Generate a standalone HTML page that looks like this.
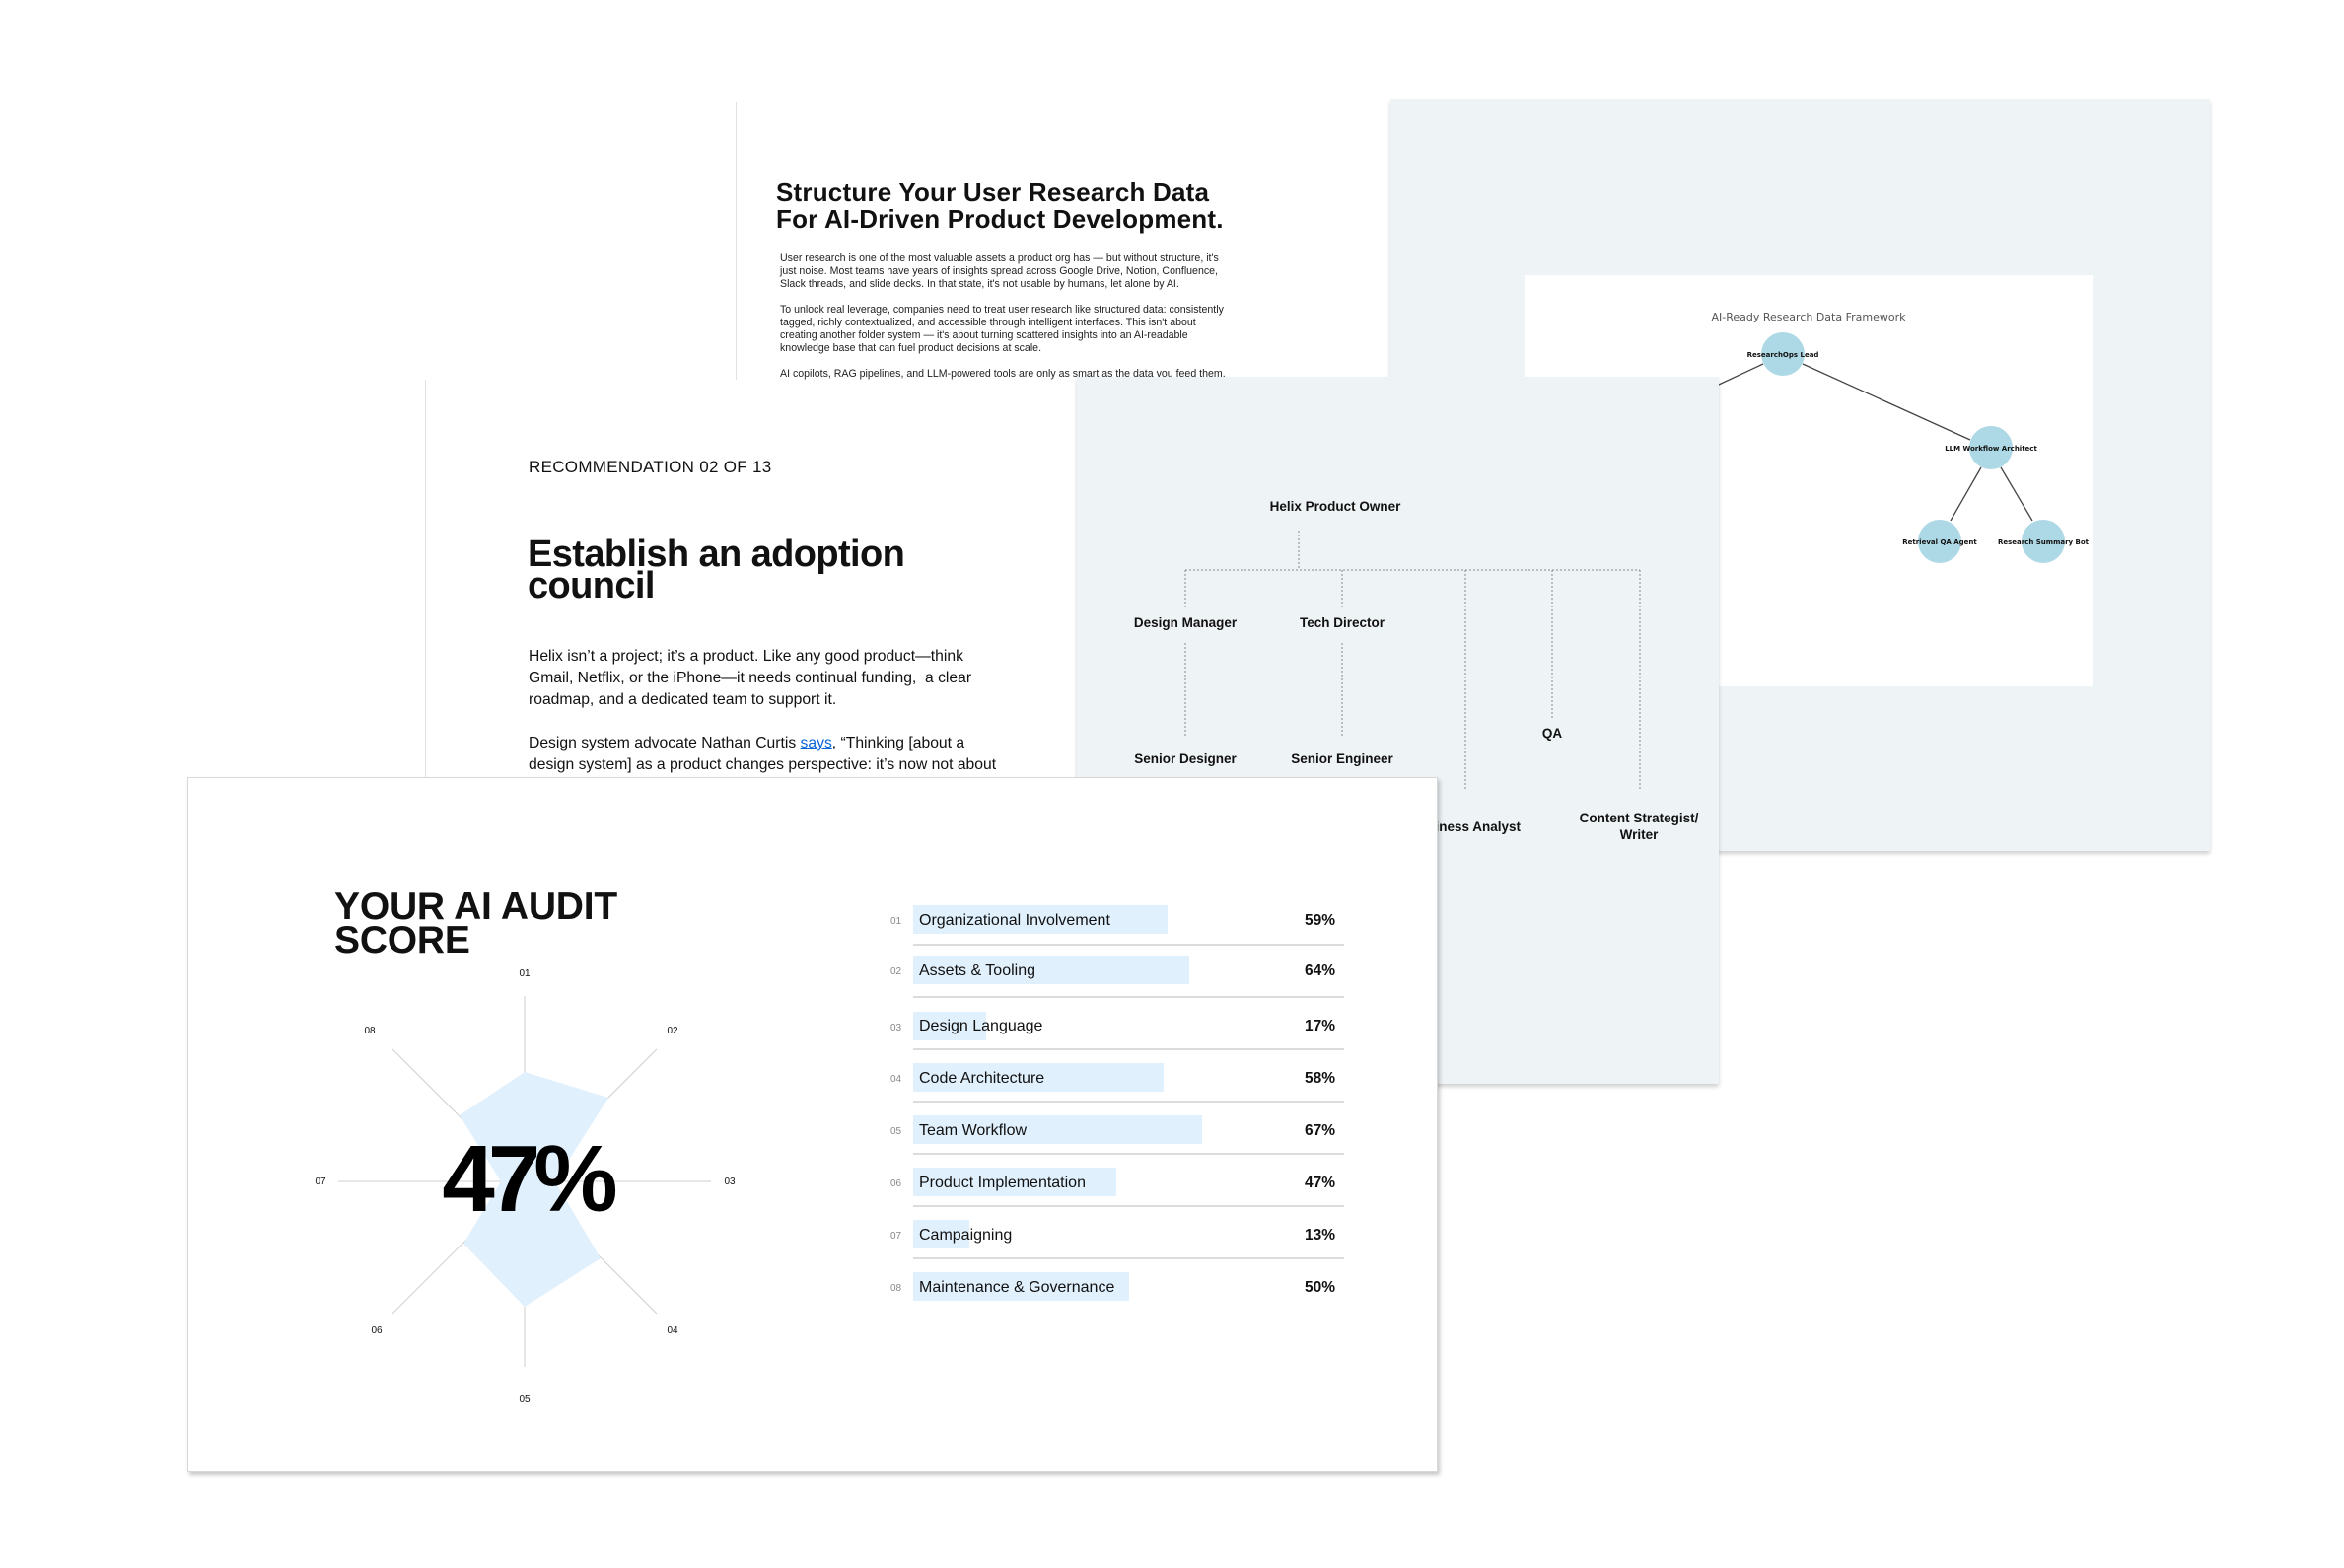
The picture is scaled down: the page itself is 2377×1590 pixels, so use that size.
<!DOCTYPE html>
<html><head><meta charset="utf-8">
<style>
*{margin:0;padding:0;box-sizing:border-box}
body{width:2377px;height:1590px;background:#fff;position:relative;overflow:hidden;font-family:"Liberation Sans",Arial,sans-serif;color:#111}
.abs{position:absolute}
.nw{white-space:nowrap}
</style></head><body>

<!-- Card A -->
<div class="abs" style="left:746px;top:103px;width:664px;height:282px;background:#fff;border-left:1px solid #e2e2e2"></div>
<div class="abs nw" style="left:787px;top:182px;font-size:26px;font-weight:bold;line-height:27px;letter-spacing:0.2px">Structure Your User Research Data<br>For AI-Driven Product Development.</div>
<div class="abs nw" style="left:791px;top:256px;font-size:10.6px;line-height:13px;color:#222">
User research is one of the most valuable assets a product org has — but without structure, it's<br>
just noise. Most teams have years of insights spread across Google Drive, Notion, Confluence,<br>
Slack threads, and slide decks. In that state, it's not usable by humans, let alone by AI.<br><br>
To unlock real leverage, companies need to treat user research like structured data: consistently<br>
tagged, richly contextualized, and accessible through intelligent interfaces. This isn't about<br>
creating another folder system — it's about turning scattered insights into an AI-readable<br>
knowledge base that can fuel product decisions at scale.<br><br>
AI copilots, RAG pipelines, and LLM-powered tools are only as smart as the data you feed them.</div>

<!-- Panel B -->
<div class="abs" style="left:1410px;top:100px;width:831px;height:763px;background:#eef3f5;box-shadow:0 3px 4px rgba(0,0,0,0.18)"></div>
<div class="abs" style="left:1546px;top:279px;width:576px;height:417px;background:#fff"></div>
<svg class="abs" style="left:0;top:0" width="2377" height="1590">
 <g stroke="#444" stroke-width="1.3">
  <line x1="1788" y1="369" x2="1700" y2="410"/>
  <line x1="1828" y1="369" x2="1998" y2="446"/>
  <line x1="2009" y1="474" x2="1978" y2="528"/>
  <line x1="2029" y1="474" x2="2061" y2="528"/>
 </g>
 <g fill="#add8e6">
  <ellipse cx="1808" cy="359" rx="22" ry="22"/>
  <ellipse cx="2019" cy="454" rx="22" ry="22"/>
  <ellipse cx="1967" cy="549" rx="22" ry="22"/>
  <ellipse cx="2072" cy="549" rx="22" ry="22"/>
 </g>
 <text x="1834" y="325" font-family="DejaVu Sans" font-size="11" fill="#555" text-anchor="middle">AI-Ready Research Data Framework</text>
 <g font-family="DejaVu Sans" font-weight="bold" font-size="7" fill="#111" text-anchor="middle">
  <text x="1808" y="362">ResearchOps Lead</text>
  <text x="2019" y="457">LLM Workflow Architect</text>
  <text x="1967" y="552">Retrieval QA Agent</text>
  <text x="2072" y="552">Research Summary Bot</text>
 </g>
</svg>

<!-- Card C -->
<div class="abs" style="left:431px;top:385px;width:661px;height:403px;background:#fff;border-left:1px solid #e2e2e2"></div>
<div class="abs nw" style="left:536px;top:464px;font-size:17px;letter-spacing:0.3px">RECOMMENDATION 02 OF 13</div>
<div class="abs nw" style="left:535px;top:546px;font-size:38px;font-weight:bold;line-height:32px;letter-spacing:-0.6px">Establish an adoption<br>council</div>
<div class="abs nw" style="left:536px;top:655px;font-size:15.7px;line-height:22px">Helix isn’t a project; it’s a product. Like any good product—think<br>Gmail, Netflix, or the iPhone—it needs continual funding,&nbsp; a clear<br>roadmap, and a dedicated team to support it.</div>
<div class="abs nw" style="left:536px;top:743px;font-size:15.7px;line-height:22px">Design system advocate Nathan Curtis <span style="color:#0a66d6;text-decoration:underline">says</span>, “Thinking [about a<br>design system] as a product changes perspective: it’s now not about</div>

<!-- Panel D -->
<div class="abs" style="left:1092px;top:382px;width:651px;height:717px;background:#eef3f5;box-shadow:0 3px 4px rgba(0,0,0,0.18)"></div>
<svg class="abs" style="left:0;top:0" width="2377" height="1590">
 <g stroke="#888" stroke-width="1" stroke-dasharray="2,2" fill="none">
  <line x1="1317" y1="538" x2="1317" y2="576"/>
  <line x1="1202" y1="578" x2="1663" y2="578"/>
  <line x1="1202" y1="578" x2="1202" y2="616"/>
  <line x1="1361" y1="578" x2="1361" y2="616"/>
  <line x1="1486" y1="578" x2="1486" y2="800"/>
  <line x1="1574" y1="578" x2="1574" y2="728"/>
  <line x1="1663" y1="578" x2="1663" y2="800"/>
  <line x1="1202" y1="652" x2="1202" y2="746"/>
  <line x1="1361" y1="652" x2="1361" y2="746"/>
 </g>
 <g font-family="Liberation Sans" font-weight="bold" font-size="13.5" fill="#111" text-anchor="middle">
  <text x="1354" y="518">Helix Product Owner</text>
  <text x="1202" y="636">Design Manager</text>
  <text x="1361" y="636">Tech Director</text>
  <text x="1202" y="774">Senior Designer</text>
  <text x="1361" y="774">Senior Engineer</text>
  <text x="1574" y="748">QA</text>
  <text x="1486" y="843">Business Analyst</text>
  <text x="1662" y="834">Content Strategist/</text>
  <text x="1662" y="851">Writer</text>
 </g>
</svg>

<!-- Card E -->
<div class="abs" style="left:190px;top:788px;width:1268px;height:705px;background:#fff;border:1px solid #d8d8d8;box-shadow:2px 3px 4px rgba(0,0,0,0.22)"></div>
<div class="abs nw" style="left:339px;top:903px;font-size:39px;font-weight:bold;line-height:34px;letter-spacing:-0.2px">YOUR AI AUDIT<br>SCORE</div>
<svg class="abs" style="left:0;top:0" width="2377" height="1590">
 <g stroke="#cfcfcf" stroke-width="1">
  <line x1="532" y1="1010" x2="532" y2="1386"/>
  <line x1="343" y1="1198" x2="721" y2="1198"/>
  <line x1="398" y1="1064" x2="666" y2="1332"/>
  <line x1="666" y1="1064" x2="398" y2="1332"/>
 </g>
 <polygon fill="#e0f0fd" points="532,1087 617,1113 563,1198 609,1276 532,1325 470,1261 508,1198 466,1131"/>
 <g font-family="Liberation Sans" font-size="10" fill="#111" text-anchor="middle">
  <text x="532" y="990">01</text>
  <text x="682" y="1048">02</text>
  <text x="740" y="1201">03</text>
  <text x="682" y="1352">04</text>
  <text x="532" y="1422">05</text>
  <text x="382" y="1352">06</text>
  <text x="325" y="1201">07</text>
  <text x="375" y="1048">08</text>
 </g>
 <text x="534" y="1228" font-family="Liberation Sans" font-weight="bold" font-size="96" letter-spacing="-7" fill="#000" text-anchor="middle">47%</text>
</svg>

<!-- bars -->
<svg class="abs" style="left:0;top:0" width="2377" height="1590">
 <g fill="#e0f0fd">
  <rect x="926" y="918" width="258" height="29"/>
  <rect x="926" y="969" width="280" height="29"/>
  <rect x="926" y="1026" width="74" height="29"/>
  <rect x="926" y="1078" width="254" height="29"/>
  <rect x="926" y="1131" width="293" height="29"/>
  <rect x="926" y="1184" width="206" height="29"/>
  <rect x="926" y="1237" width="57" height="29"/>
  <rect x="926" y="1290" width="219" height="29"/>
 </g>
 <g stroke="#d0d0d0" stroke-width="1.5">
  <line x1="926" y1="958" x2="1363" y2="958"/>
  <line x1="926" y1="1011" x2="1363" y2="1011"/>
  <line x1="926" y1="1064" x2="1363" y2="1064"/>
  <line x1="926" y1="1117" x2="1363" y2="1117"/>
  <line x1="926" y1="1170" x2="1363" y2="1170"/>
  <line x1="926" y1="1223" x2="1363" y2="1223"/>
  <line x1="926" y1="1276" x2="1363" y2="1276"/>
 </g>
 <g font-family="Liberation Sans" font-size="10" fill="#888">
  <text x="903" y="937">01</text><text x="903" y="988">02</text><text x="903" y="1045">03</text><text x="903" y="1097">04</text>
  <text x="903" y="1150">05</text><text x="903" y="1203">06</text><text x="903" y="1256">07</text><text x="903" y="1309">08</text>
 </g>
 <g font-family="Liberation Sans" font-size="16" fill="#111">
  <text x="932" y="938">Organizational Involvement</text>
  <text x="932" y="989">Assets &amp; Tooling</text>
  <text x="932" y="1045">Design Language</text>
  <text x="932" y="1098">Code Architecture</text>
  <text x="932" y="1151">Team Workflow</text>
  <text x="932" y="1204">Product Implementation</text>
  <text x="932" y="1257">Campaigning</text>
  <text x="932" y="1310">Maintenance &amp; Governance</text>
 </g>
 <g font-family="Liberation Sans" font-weight="bold" font-size="15.5" fill="#111" text-anchor="end">
  <text x="1354" y="938">59%</text><text x="1354" y="989">64%</text><text x="1354" y="1045">17%</text><text x="1354" y="1098">58%</text>
  <text x="1354" y="1151">67%</text><text x="1354" y="1204">47%</text><text x="1354" y="1257">13%</text><text x="1354" y="1310">50%</text>
 </g>
</svg>
</body></html>
